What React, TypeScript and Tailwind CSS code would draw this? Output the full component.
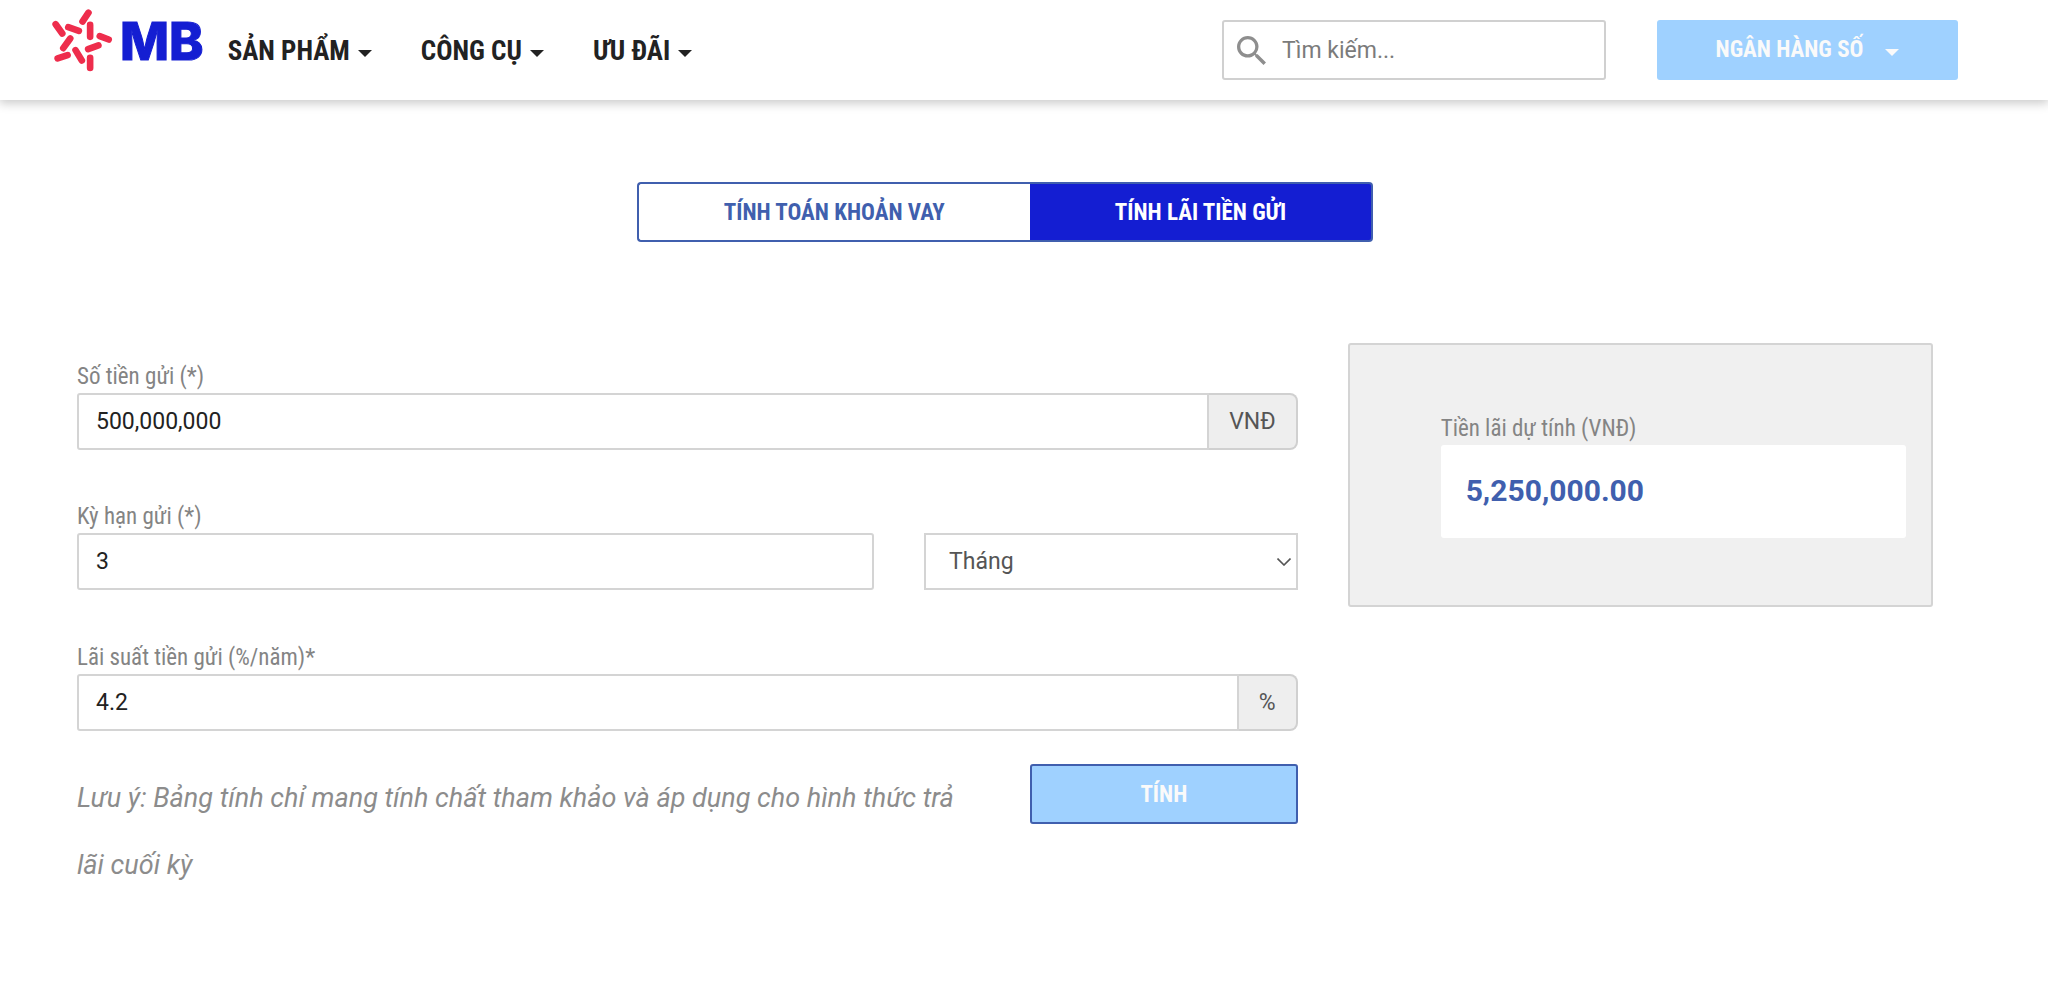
import type { ReactNode } from "react";

const condensed = "font-['Roboto_Condensed',Roboto,sans-serif]";
const labelClass = "block text-[23px] leading-[28px] text-[#848484] font-['Roboto_Condensed',Roboto,sans-serif]";
const fieldClass =
  "h-[57px] w-full min-w-0 rounded-[3px] border-2 border-[#d4d4d4] bg-white pr-4 pl-[17px] text-[23px] text-[#222] outline-none";
const addonClass =
  "flex shrink-0 items-center justify-center rounded-r-[8px] border-y-2 border-r-2 border-[#d0d0d0] bg-[#eee] px-5 pt-[2px] text-[23px] text-[#555]";

function Caret() {
  return (
    <svg viewBox="0 0 14 7" className="mt-1 h-[7px] w-[14px]" fill="currentColor" aria-hidden="true">
      <path d="M0 0h14L7 7z" />
    </svg>
  );
}

function Logo() {
  return (
    <a href="#" aria-label="MB" className="flex items-start gap-[7px]">
      <svg viewBox="36 28 182 190" className="mt-[9px] h-[63px] w-[61px]" stroke="#ee2d4c" strokeWidth="20" strokeLinecap="round" fill="none" aria-hidden="true">
        <path d="M127 66 145 39M150 76v36M84 83l32 11M46 74l20 28M90 117l-21 29M52 177l30-10M179 110l27 10M144 149l31-11M106 152l19 31M150 175v31" />
      </svg>
      <span className="mt-[9px] text-[52px] leading-[66px] font-extrabold text-[#141ed2] [-webkit-text-stroke:1px_#141ed2] [paint-order:stroke] font-['Inter',sans-serif]">MB</span>
    </a>
  );
}

function NavItem({ children }: { children: ReactNode }) {
  return (
    <button type="button" className={`flex items-center gap-2 text-[27px] leading-[30px] font-bold text-[#222] ${condensed}`}>
      {children}
      <Caret />
    </button>
  );
}

export default function App() {
  return (
    <div className="min-h-screen bg-white font-['Roboto',sans-serif]">
      <header className="flex h-[100px] items-start justify-between pr-[90px] pl-[52px] shadow-[0_2px_10px_1px_rgba(0,0,0,0.22)]">
        <div className="flex items-start">
          <Logo />
          <nav className="mt-9 ml-6 flex gap-[49px]">
            <NavItem>SẢN PHẨM</NavItem>
            <NavItem>CÔNG CỤ</NavItem>
            <NavItem>ƯU ĐÃI</NavItem>
          </nav>
        </div>
        <div className="mt-5 flex h-[60px] gap-[51px]">
          <label className="flex w-96 items-center gap-4 rounded-[3px] border-2 border-[#d0d0d0] pl-[13px]">
            <svg viewBox="3 3 17.5 17.5" className="h-[29px] w-[29px] shrink-0" fill="#8e8e8e" aria-hidden="true">
              <path d="M15.5 14h-.79l-.28-.27A6.47 6.47 0 0 0 16 9.5 6.5 6.5 0 1 0 9.5 16c1.61 0 3.09-.59 4.23-1.57l.27.28v.79l5 4.99L20.49 19l-4.99-5zm-6 0C7.01 14 5 11.99 5 9.5S7.01 5 9.5 5 14 7.01 14 9.5 11.99 14 9.5 14z" />
            </svg>
            <input type="search" aria-label="Tìm kiếm" placeholder="Tìm kiếm..." className="w-full min-w-0 pt-[2px] text-[23px] outline-none placeholder:text-[#7b7b7b]" />
          </label>
          <button type="button" className={`flex w-[301px] items-center justify-center gap-[22px] rounded-[3px] bg-[#9fd1ff] text-[23px] font-bold text-[#fafafa] ${condensed}`}>
            NGÂN HÀNG SỐ
            <Caret />
          </button>
        </div>
      </header>

      <main className="pr-[90px] pl-[52px]">
        <div className={`mx-auto mt-[82px] flex h-[60px] w-fit text-[23px] font-bold ${condensed}`}>
          <button type="button" className="rounded-l-[4px] border-2 border-r-0 border-[#405fae] px-[85px] pt-[2px] text-[#405fae]">TÍNH TOÁN KHOẢN VAY</button>
          <button type="button" className="rounded-r-[4px] border-2 border-l-0 border-[#405fae] bg-[#141ed2] px-[85px] pt-[2px] text-white">TÍNH LÃI TIỀN GỬI</button>
        </div>

        <div className="mt-[101px] grid grid-cols-3 items-start">
          <form className="col-span-2 pt-5">
            <div className="px-[25px]">
              <label htmlFor="amount" className={labelClass}>Số tiền gửi (*)</label>
              <div className="mt-[2px] flex">
                <input id="amount" type="text" defaultValue="500,000,000" className={`${fieldClass} rounded-r-none`} />
                <span className={addonClass}>VNĐ</span>
              </div>
            </div>

            <div className="mt-[53px] grid grid-cols-3 items-end">
              <div className="col-span-2 px-[25px]">
                <label htmlFor="term" className={labelClass}>Kỳ hạn gửi (*)</label>
                <input id="term" type="text" defaultValue="3" className={`${fieldClass} mt-[2px] block`} />
              </div>
              <div className="relative px-[25px]">
                <select aria-label="Đơn vị kỳ hạn" className="block h-[57px] w-full appearance-none border-2 border-[#d4d4d4] bg-white pt-[2px] pl-[23px] text-[23px] text-[#555] outline-none">
                  <option>Tháng</option>
                  <option>Ngày</option>
                </select>
                <svg viewBox="0 0 14 8" className="pointer-events-none absolute top-[25px] right-8 h-2 w-[14px]" fill="none" stroke="#555" strokeWidth="1.6" aria-hidden="true">
                  <path d="M.5.5 7 7 13.5.5" />
                </svg>
              </div>
            </div>

            <div className="mt-[54px] px-[25px]">
              <label htmlFor="rate" className={labelClass}>Lãi suất tiền gửi (%/năm)*</label>
              <div className="mt-[2px] flex">
                <input id="rate" type="text" defaultValue="4.2" className={`${fieldClass} rounded-r-none`} />
                <span className={addonClass}>%</span>
              </div>
            </div>

            <div className="mt-[33px] grid grid-cols-4 items-start">
              <p className="col-span-3 px-[25px] pt-px text-[27px] leading-[67px] text-[#8c8c8c] italic">
                Lưu ý: Bảng tính chỉ mang tính chất tham khảo và áp dụng cho hình thức trả lãi cuối kỳ
              </p>
              <div className="px-[25px]">
                <button type="button" className={`h-[60px] w-full rounded-[3px] border-2 border-[#405fae] bg-[#9fd1ff] pt-[2px] text-[23px] font-bold text-[#fafafa] ${condensed}`}>TÍNH</button>
              </div>
            </div>
          </form>

          <aside className="mx-[25px] rounded-[3px] border-2 border-[#d4d4d4] bg-[#f0f0f0] pt-[70px] pr-[25px] pb-[67px] pl-[91px]">
            <span className={labelClass}>Tiền lãi dự tính (VNĐ)</span>
            <output className="mt-[2px] flex h-[93px] items-center rounded-[3px] bg-white px-[25px] pb-[2px] text-[30px] font-bold text-[#405fae]">5,250,000.00</output>
          </aside>
        </div>
      </main>
    </div>
  );
}
